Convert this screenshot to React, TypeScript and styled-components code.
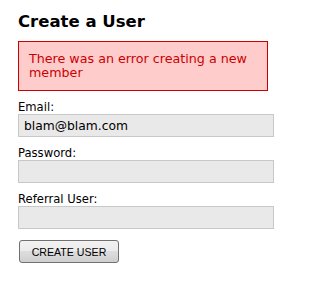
import React from "react";
import styled, { createGlobalStyle } from "styled-components";

const Global = createGlobalStyle`
  html, body { margin: 0; padding: 0; background: #fff; }
  body { font-family: "DejaVu Sans", Verdana, sans-serif; }
`;

const Page = styled.div`
  padding: 12px 0 0 18px;
  width: 256px;
`;

const Title = styled.h2`
  margin: 0 0 9px 0;
  font-size: 16.5px;
  line-height: 20px;
  font-weight: bold;
  color: #000;
`;

const ErrorBox = styled.div`
  width: 228px;
  border: 1px solid #cc0000;
  background: #ffcccc;
  color: #cc0000;
  font-size: 12.7px;
  line-height: 14px;
  padding: 10px 10px 10px 10px;
  margin-bottom: 10px;
`;

const Form = styled.form`
  display: flex;
  flex-direction: column;
`;

const Field = styled.div`
  display: flex;
  flex-direction: column;
  margin-bottom: 10px;
`;

const Label = styled.label`
  font-size: 11.6px;
  line-height: 13px;
  color: #000;
`;

const Input = styled.input`
  box-sizing: border-box;
  width: 256px;
  height: 23px;
  border: 1px solid #c8c8c8;
  background: #e9e9e9;
  padding: 0 5px;
  font-family: "DejaVu Sans", Verdana, sans-serif;
  font-size: 12.3px;
  color: #000;
  outline: none;
`;

const Button = styled.button`
  margin-top: 1px;
  margin-left: 1px;
  width: 100px;
  height: 23px;
  border: 1px solid #707070;
  border-radius: 3px;
  background: linear-gradient(#f2f2f2 0%, #ebebeb 50%, #dddddd 50%, #cfcfcf 100%);
  font-family: "Liberation Sans", Arial, sans-serif;
  font-size: 10.6px;
  color: #000;
  padding: 0;
`;

export default function App() {
  return (
    <>
      <Global />
      <Page>
        <Title>Create a User</Title>
        <ErrorBox>There was an error creating a new member</ErrorBox>
        <Form onSubmit={(e) => e.preventDefault()}>
          <Field>
            <Label>Email:</Label>
            <Input defaultValue="blam@blam.com" />
          </Field>
          <Field>
            <Label>Password:</Label>
            <Input type="password" />
          </Field>
          <Field>
            <Label>Referral User:</Label>
            <Input />
          </Field>
          <Button type="submit">CREATE USER</Button>
        </Form>
      </Page>
    </>
  );
}
